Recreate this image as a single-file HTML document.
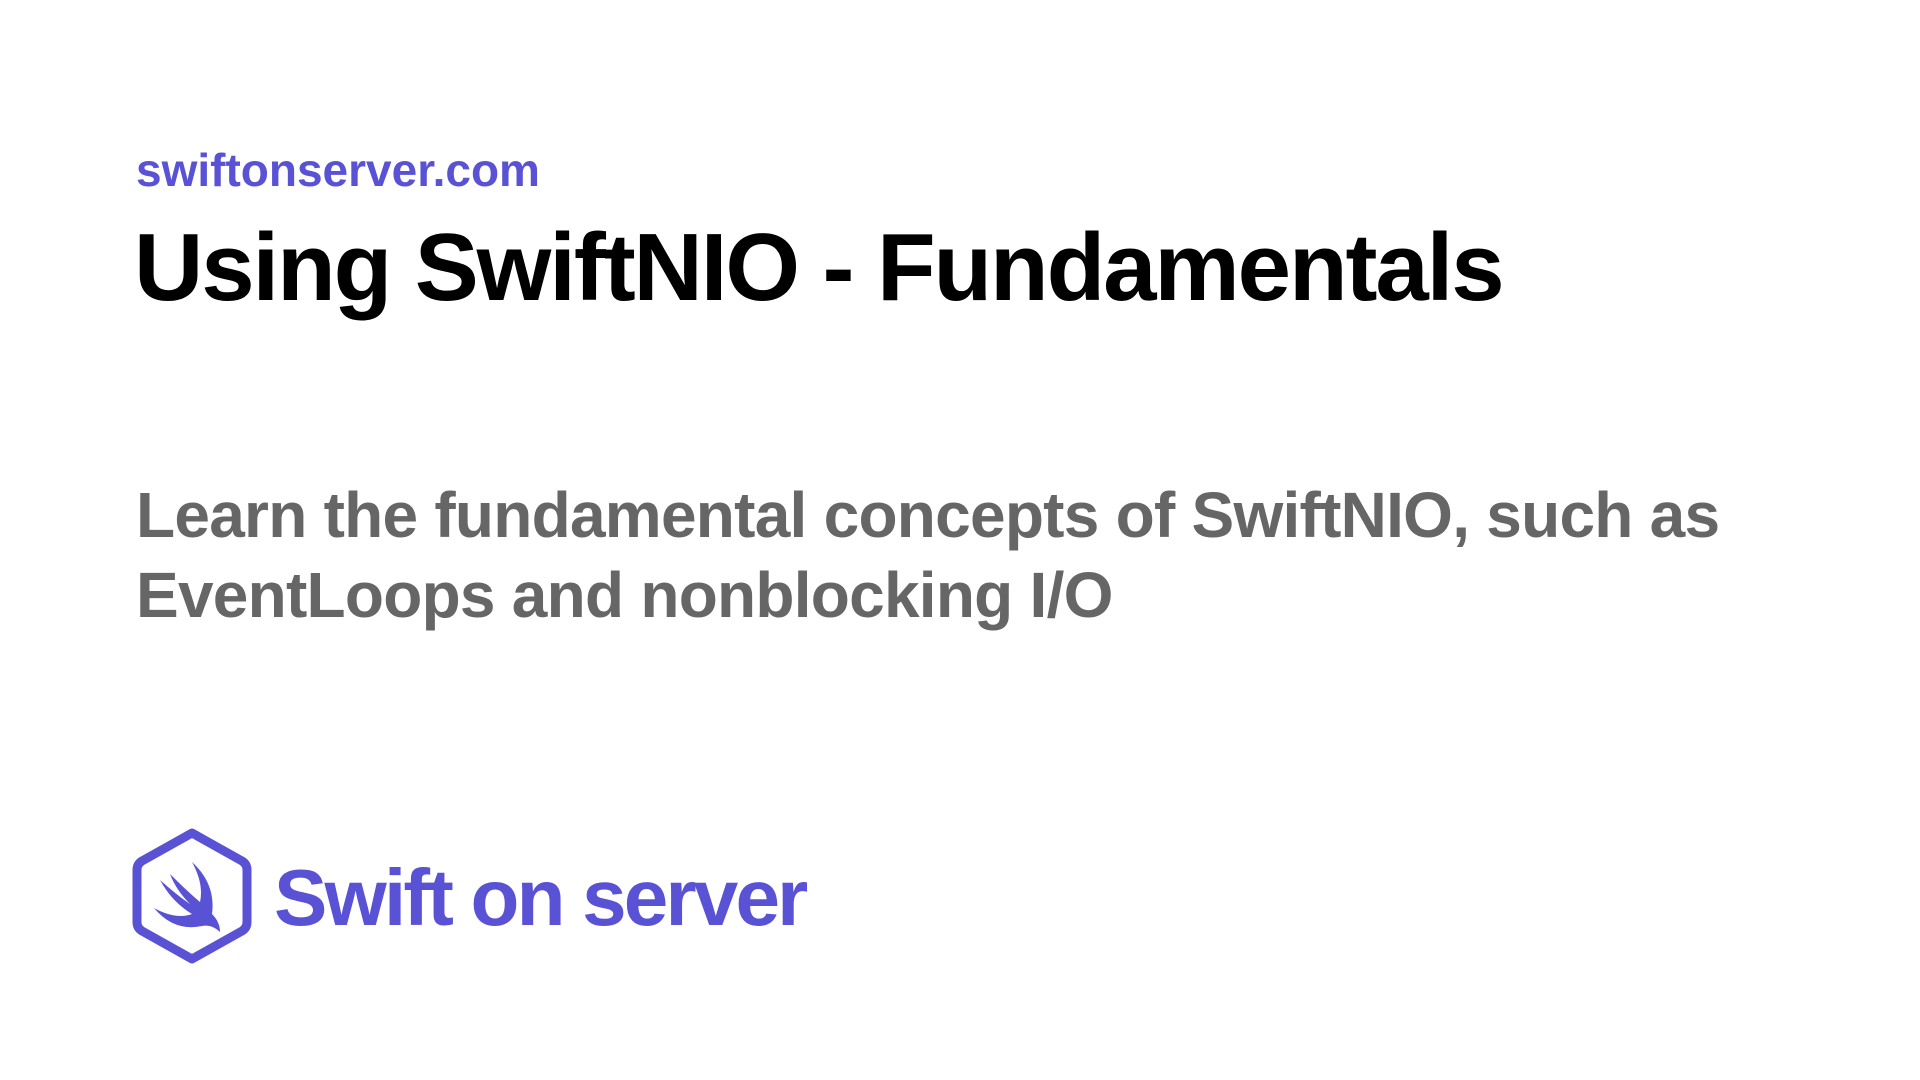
<!DOCTYPE html>
<html><head><meta charset="utf-8"><style>
html,body{margin:0;padding:0;background:#fff;width:1920px;height:1080px;overflow:hidden}
body{font-family:"Liberation Sans",sans-serif;font-weight:bold;position:relative}
.d{position:absolute;left:136px;top:143px;font-size:46px;color:#5a52d5;white-space:nowrap}
.t{position:absolute;left:134px;top:213px;font-size:96px;color:#000;white-space:nowrap;letter-spacing:-2.1px}
.b{position:absolute;left:136px;top:475px;font-size:64px;line-height:80px;color:#666;width:1760px;letter-spacing:-0.75px}
.l{position:absolute;left:274px;top:852px;font-size:80px;color:#5a52d5;white-space:nowrap;letter-spacing:-2.8px}
svg{position:absolute;left:130px;top:828px}
</style></head><body>
<div class="d">swiftonserver.com</div>
<div class="t">Using SwiftNIO - Fundamentals</div>
<div class="b">Learn the fundamental concepts of SwiftNIO, such as<br>EventLoops and nonblocking I/O</div>
<svg width="124" height="136" viewBox="0 0 124 136">
<path d="M62 5 L112 33 Q117 36 117 42 L117 94 Q117 100 112 103 L62 131 L12 103 Q7 100 7 94 L7 42 Q7 36 12 33 Z" fill="none" stroke="#5a52d5" stroke-width="9" stroke-linejoin="round"/>
<path d="M62 34 Q86 56 82 86 Q90 94 90 104 Q82 96 72 98 Q44 104 24 80 Q46 92 62 86 Q42 74 30 52 Q48 68 60 76 Q46 62 40 46 Q58 64 70 74 Q74 56 62 34 Z" fill="#5a52d5"/>
</svg>
<div class="l">Swift on server</div>
</body></html>
